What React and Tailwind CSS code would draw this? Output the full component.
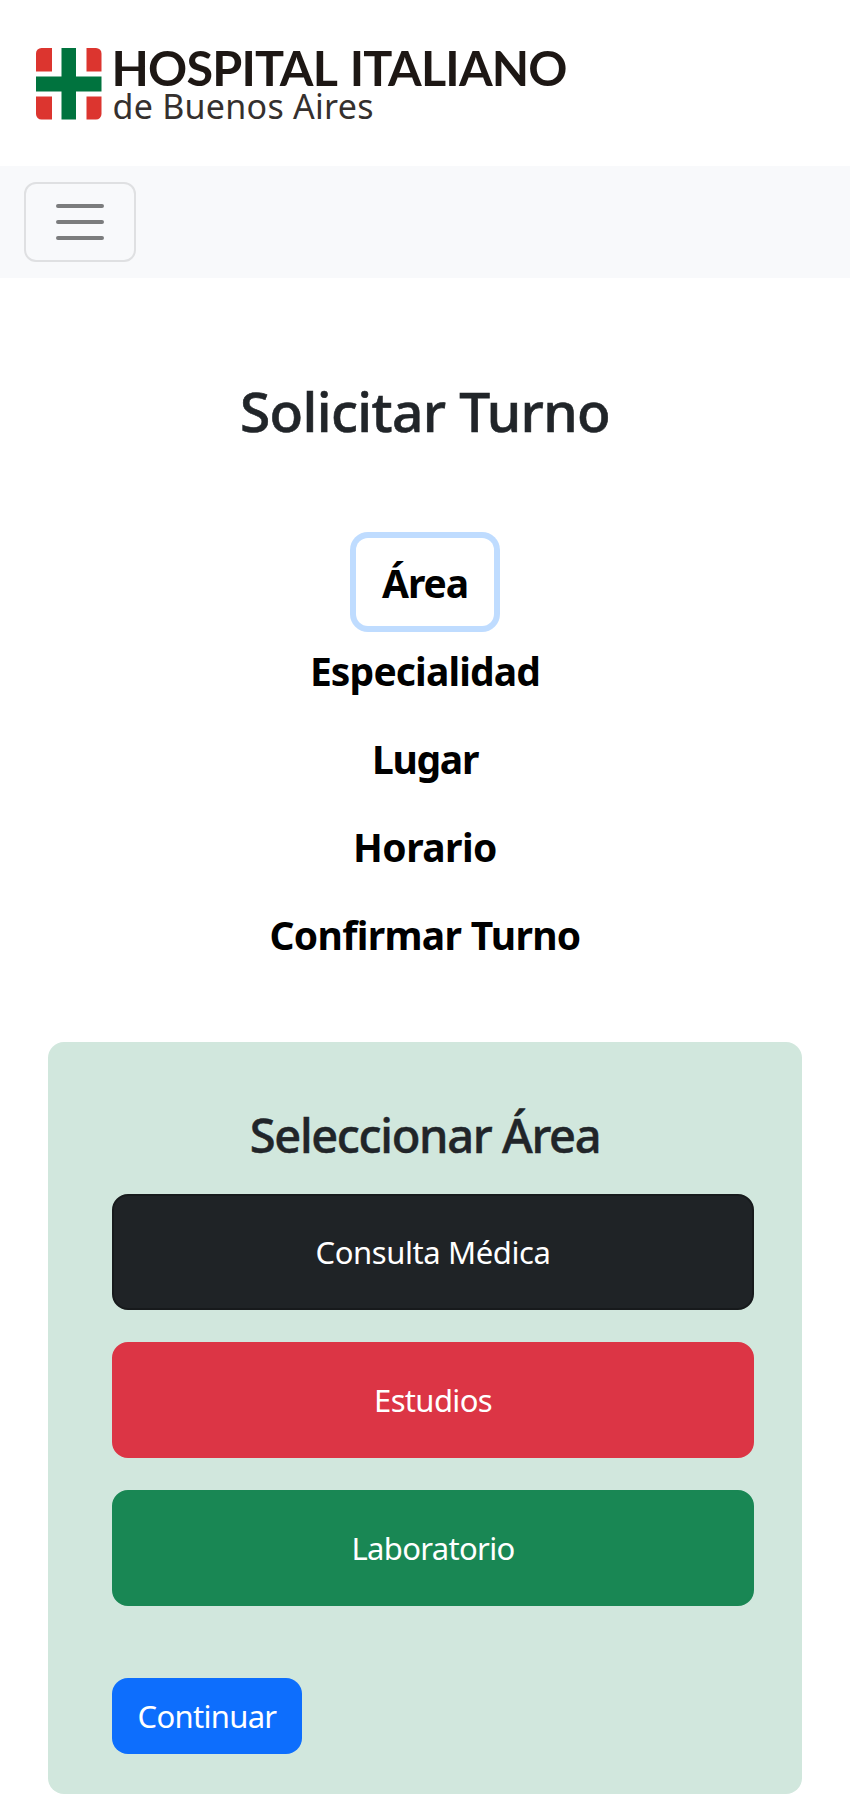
const steps = [
  { label: "Área", tracking: "tracking-[-1.1px]", active: true },
  { label: "Especialidad", tracking: "tracking-[-0.85px]" },
  { label: "Lugar", tracking: "tracking-[-1.3px]" },
  { label: "Horario", tracking: "tracking-[-0.55px]" },
  { label: "Confirmar Turno", tracking: "tracking-[-0.65px]" },
];

const areas = [
  { label: "Consulta Médica", style: "bg-[#1f2326] border-[#171a1c] tracking-[-0.4px]" },
  { label: "Estudios", style: "bg-[#dc3545] border-[#dc3545] tracking-[-0.65px]" },
  { label: "Laboratorio", style: "bg-[#198754] border-[#198754] tracking-[-0.68px]" },
];

function Logo() {
  return (
    <svg width="560" height="96" viewBox="24 36 560 96" role="img" aria-label="Hospital Italiano de Buenos Aires">
      <path fill="#dc352f" d="M41.500 48H52v23.500H36V53.500A5.500 5.500 0 0 1 41.500 48Z" />
      <path fill="#dc352f" d="M86.500 48H96a5.500 5.500 0 0 1 5.500 5.500v18h-15Z" />
      <path fill="#dc352f" d="M36 96.500h16v23H41.500a5.500 5.500 0 0 1-5.500-5.500Z" />
      <path fill="#dc352f" d="M86.500 96.500h15V114a5.500 5.500 0 0 1-5.500 5.500h-9.500Z" />
      <path fill="#00733e" d="M61.500 48H76v28.500h25.500v15H76v28H61.500v-28H36v-15h25.500Z" />
      <text x="111.500" y="85.700" textLength="456" className="fill-[#1d1714] font-['Lato',sans-serif] text-[48.500px] font-bold [word-spacing:3px]">
        HOSPITAL ITALIANO
      </text>
      <text x="112.500" y="119.300" textLength="261" className="fill-[#35302e] font-['Noto_Sans',sans-serif] text-[34px]">
        de Buenos Aires
      </text>
    </svg>
  );
}

export default function App() {
  return (
    <div className="min-h-[1794px] bg-white font-['Noto_Sans',sans-serif] text-[#212529]">
      <header className="h-[166px] px-6 pt-9">
        <Logo />
      </header>

      <nav className="flex h-28 items-center bg-[#f8f9fb] px-6">
        <button aria-label="Menú" className="flex h-20 w-28 items-center justify-center rounded-xl border-2 border-[#dfe0e2]">
          <svg width="60" height="60" viewBox="0 0 30 30" fill="none" stroke="#7b7c7d" strokeWidth="2" strokeLinecap="round">
            <path d="M4 7h22M4 15h22M4 23h22" />
          </svg>
        </button>
      </nav>

      <main className="px-12 pt-[95px]">
        <h1 className="text-center text-[55px] leading-[76px] font-medium tracking-[-0.62px] [-webkit-text-stroke:0.6px_#212529]">
          Solicitar Turno
        </h1>

        <div className="flex flex-col items-center pt-[89px]">
          {steps.map(({ label, tracking, active }) => (
            <button
              key={label}
              className={`flex h-[88px] items-center justify-center rounded-xl px-[26px] pt-0.5 text-[39px] font-bold text-black ${tracking} ${active ? "w-[138px] ring-[6px] ring-[#bfdcff]" : ""}`}
            >
              {label}
            </button>
          ))}
        </div>

        <section className="mt-16 h-[752px] rounded-2xl bg-[#d1e7dd] pt-16 pr-12 pl-16">
          <h2 className="pr-4 text-center text-[47px] leading-[58px] font-medium tracking-[-1.35px] [-webkit-text-stroke:0.5px_#212529]">
            Seleccionar Área
          </h2>
          <div className="flex flex-col gap-8 pt-[30px]">
            {areas.map(({ label, style }) => (
              <button key={label} className={`h-[116px] rounded-2xl border-2 text-[31px] text-white ${style}`}>
                {label}
              </button>
            ))}
          </div>
          <button className="mt-[72px] h-[76px] w-[190px] rounded-2xl bg-[#0d6efd] text-[31px] tracking-[-0.7px] text-white">
            Continuar
          </button>
        </section>
      </main>
    </div>
  );
}
